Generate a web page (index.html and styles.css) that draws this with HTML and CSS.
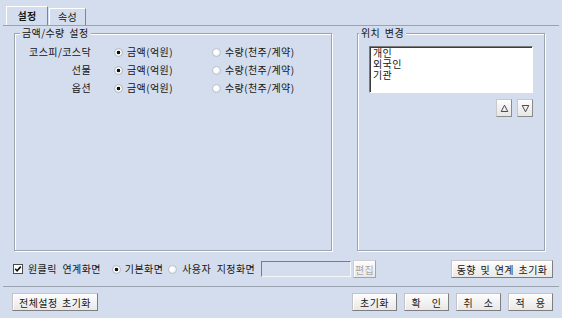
FILE: index.html
```html
<!DOCTYPE html>
<html>
<head>
<meta charset="utf-8">
<title>설정</title>
<link rel="stylesheet" href="styles.css">
</head>
<body>

<div class="tabs">
  <span class="tab tab-on">설정</span>
  <span class="tab">속성</span>
</div>

<div class="sheet">
  <div class="groups">
    <fieldset class="group group-amount">
      <legend>금액/수량 설정</legend>
      <div class="units">
        <div class="unit-row">
          <span class="unit-name">코스피/코스닥</span>
          <label class="opt opt-first"><i class="radio radio-on"></i>금액(억원)</label>
          <label class="opt"><i class="radio"></i>수량(천주/계약)</label>
        </div>
        <div class="unit-row">
          <span class="unit-name">선물</span>
          <label class="opt opt-first"><i class="radio radio-on"></i>금액(억원)</label>
          <label class="opt"><i class="radio"></i>수량(천주/계약)</label>
        </div>
        <div class="unit-row">
          <span class="unit-name">옵션</span>
          <label class="opt opt-first"><i class="radio radio-on"></i>금액(억원)</label>
          <label class="opt"><i class="radio"></i>수량(천주/계약)</label>
        </div>
      </div>
    </fieldset>

    <fieldset class="group group-order">
      <legend>위치 변경</legend>
      <ul class="listbox">
        <li>개인</li>
        <li>외국인</li>
        <li>기관</li>
      </ul>
      <div class="move">
        <button class="move-btn" title="위로">
          <svg width="9" height="9" viewBox="0 0 9 9"><path d="M4.5 1.2 L7.8 7.5 H1.2 Z" fill="none" stroke="#4a4a4a" stroke-width="1"/></svg>
        </button>
        <button class="move-btn" title="아래로">
          <svg width="9" height="9" viewBox="0 0 9 9"><path d="M4.5 7.8 L7.8 1.5 H1.2 Z" fill="none" stroke="#4a4a4a" stroke-width="1"/></svg>
        </button>
      </div>
    </fieldset>
  </div>

  <div class="link-row">
    <label class="check">
      <i class="checkbox"><svg width="8" height="8" viewBox="0 0 8 8"><path d="M1.2 3.8 L3.1 5.8 L6.8 1.6" fill="none" stroke="#111" stroke-width="1.6"/></svg></i>
      원클릭 연계화면
    </label>
    <label class="opt opt-basic"><i class="radio radio-on"></i>기본화면</label>
    <label class="opt opt-user"><i class="radio"></i>사용자 지정화면</label>
    <input class="screen-input" type="text" disabled>
    <button class="btn btn-edit" disabled>편집</button>
    <button class="btn btn-reset-link">동향 및 연계 초기화</button>
  </div>
</div>

<div class="footer">
  <button class="btn btn-reset-all">전체설정 초기화</button>
  <div class="actions">
    <button class="btn btn-action">초기화</button>
    <button class="btn btn-action btn-spaced">확 인</button>
    <button class="btn btn-action btn-spaced">취 소</button>
    <button class="btn btn-action btn-spaced">적 용</button>
  </div>
</div>

</body>
</html>
```

FILE: styles.css
```css
body {
  margin: 0;
  width: 562px;
  height: 318px;
  overflow: hidden;
  background-color: #d4ddee;
  font-family: "Noto Sans CJK KR", "Noto Sans", sans-serif;
  font-size: 10px;
  line-height: 12px;
  letter-spacing: 0.4px;
  word-spacing: 2px;
  color: #141414;
}

/* tab strip */
.tabs {
  display: flex;
  align-items: flex-end;
  height: 25px;
  padding-left: 6px;
  box-sizing: border-box;
}

.tab {
  display: flex;
  align-items: center;
  justify-content: center;
  width: 37px;
  height: 17px;
  margin-left: 1px;
  box-sizing: border-box;
  border: 1px solid;
  border-color: #fff #7d8594 transparent #fff;
  border-bottom: 0;
}

.tab-on {
  width: 42px;
  height: 19px;
  margin-left: 0;
  font-weight: bold;
}

.sheet {
  margin: 0 3px;
  border-top: 1px solid #9aa2b0;
}

/* group boxes */
.groups {
  display: flex;
  gap: 25px;
  padding: 1px 0 0 11px;
}

.group {
  margin: 0;
  padding: 0;
  min-width: 0;
  height: 224px;
  box-sizing: border-box;
  border: 1px solid #9ea4ae;
  box-shadow: inset 1px 1px 0 #fff, 1px 1px 0 #fff;
}

.group legend {
  margin-left: 5px;
  padding: 0 2px;
  line-height: 12px;
  background-color: #d4ddee;
}

.group-amount {
  width: 318px;
}

.group-order {
  width: 188px;
}

.group-order legend {
  margin-left: 1px;
}

.units {
  padding-top: 4px;
}

.unit-row {
  display: grid;
  grid-template-columns: 76px 121px auto;
  align-items: center;
  height: 18px;
}

.unit-name {
  text-align: right;
}

.opt {
  display: flex;
  align-items: center;
  gap: 4px;
}

.opt-first {
  padding-left: 23px;
}

.radio {
  display: inline-block;
  flex: none;
  width: 9px;
  height: 9px;
  box-sizing: border-box;
  border-radius: 50%;
  border: 1px solid #bcc1ca;
  background: radial-gradient(circle at 40% 40%, #fff 0, #fff 35%, #d9dde2 100%);
}

.radio-on {
  border-color: #b4b9c2;
  background: radial-gradient(circle, #111 0, #111 1.6px, #fff 2.1px, #fff 45%, #dfe2e6 100%);
}

/* list of investor types */
.listbox {
  list-style: none;
  margin: 7px 11px 0;
  padding: 0 0 0 3px;
  height: 47px;
  box-sizing: border-box;
  background-color: #fff;
  border: 1px solid;
  border-color: #7a7a7a #fff #fff #7a7a7a;
  box-shadow: inset 1px 1px 0 #3c3c3c;
  line-height: 11px;
}

.move {
  display: flex;
  justify-content: flex-end;
  gap: 5px;
  margin: 6px 11px 0;
}

.move-btn {
  display: flex;
  align-items: center;
  justify-content: center;
  width: 16px;
  height: 18px;
  padding: 0;
  border: 1px solid;
  border-color: #c9c9c9 #8a8a8a #8a8a8a #c9c9c9;
  background: linear-gradient(#fdfdfd, #e6e6e6);
}

/* link screen row */
.link-row {
  display: flex;
  align-items: center;
  height: 18px;
  margin-top: 9px;
  padding: 0 6px 0 10px;
}

.check {
  display: flex;
  align-items: center;
  gap: 5px;
  word-spacing: 3px;
}

.checkbox {
  display: flex;
  align-items: center;
  justify-content: center;
  width: 10px;
  height: 10px;
  box-sizing: border-box;
  border: 1px solid #4a4a4a;
  background-color: #fff;
}

.opt-basic {
  margin-left: 11px;
}

.opt-user {
  margin-left: 5px;
  gap: 5px;
  word-spacing: 3px;
}

.screen-input {
  width: 90px;
  height: 16px;
  margin: 0 0 0 6px;
  padding: 0;
  box-sizing: border-box;
  border: 1px solid;
  border-color: #7c7c7c #f4f6fa #f4f6fa #7c7c7c;
  background-color: #d4ddee;
}

.btn {
  height: 18px;
  padding: 0;
  box-sizing: border-box;
  font-family: inherit;
  font-size: 10px;
  letter-spacing: 0.4px;
  color: #141414;
  border: 1px solid;
  border-color: #c4c4c4 #7e7e7e #7e7e7e #c4c4c4;
  background: linear-gradient(#fdfdfd, #e8e8e8);
  box-shadow: inset 1px 1px 0 #fff;
  word-spacing: 2px;
}

.btn-edit {
  width: 23px;
  margin-left: 2px;
  color: #a8a8a8;
  border-color: #d0d0d0 #a4a4a4 #a4a4a4 #d0d0d0;
}

.btn-reset-link {
  width: 102px;
  margin-left: auto;
}

/* footer buttons */
.footer {
  display: flex;
  justify-content: space-between;
  margin: 8px 3px 0;
  padding: 6px 6px 0 9px;
  border-top: 1px solid #9aa2b0;
}

.btn-reset-all {
  width: 86px;
}

.actions {
  display: flex;
  gap: 7px;
}

.btn-action {
  width: 45px;
}

.btn-spaced {
  word-spacing: 8px;
}
```
